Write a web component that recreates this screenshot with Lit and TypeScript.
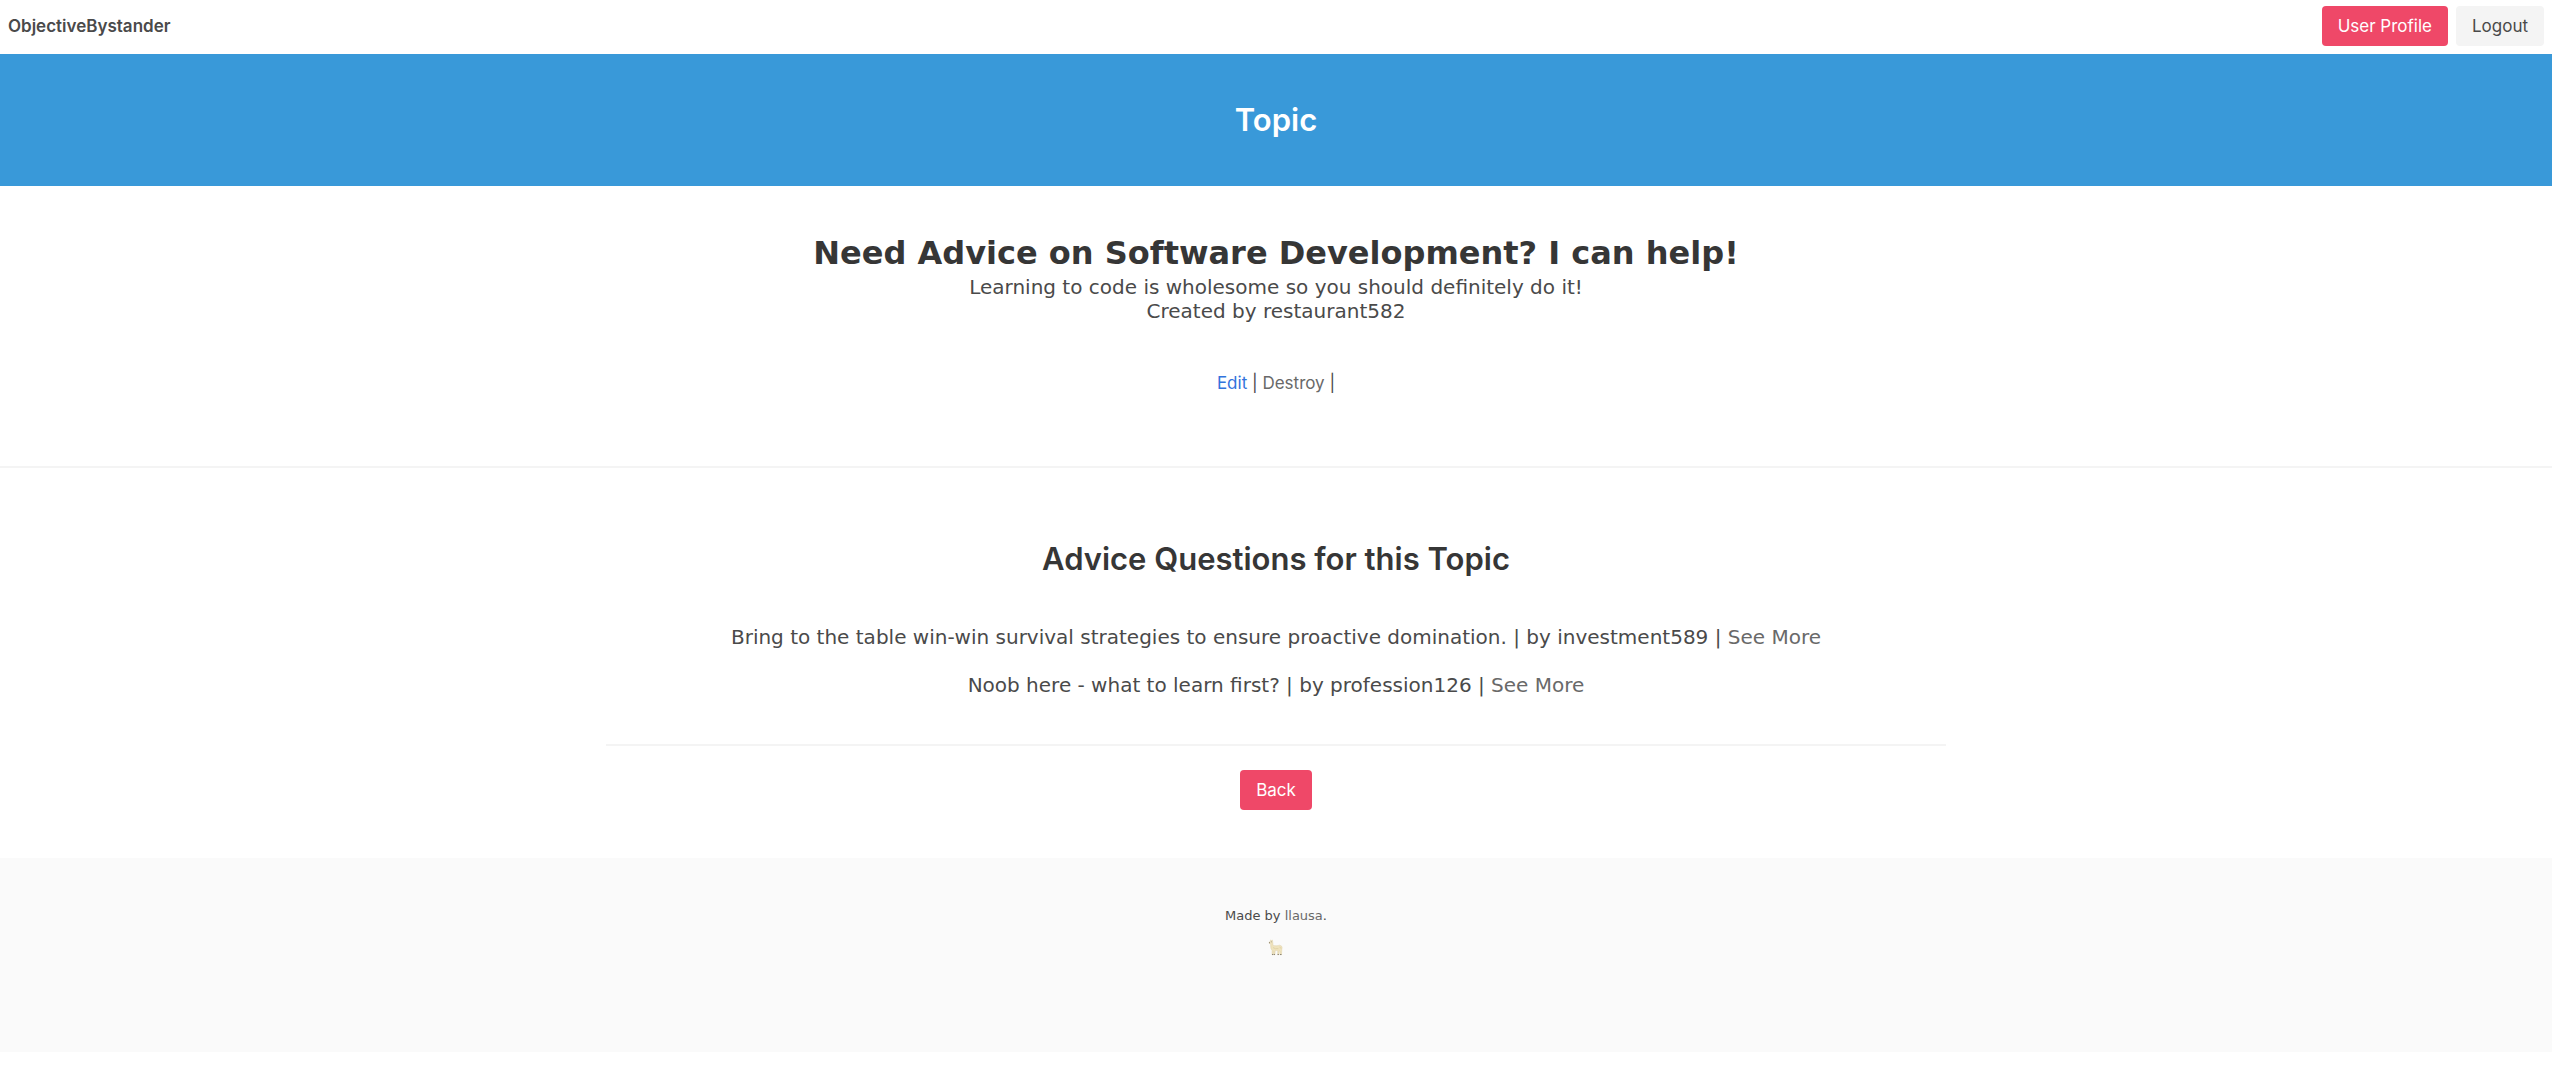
import { LitElement, html, css } from "lit";
import { customElement } from "lit/decorators.js";

interface Question {
  text: string;
  author: string;
}

const questions: Question[] = [
  {
    text: "Bring to the table win-win survival strategies to ensure proactive domination.",
    author: "investment589",
  },
  { text: "Noob here - what to learn first?", author: "profession126" },
];

@customElement("app-root")
export class AppRoot extends LitElement {
  static styles = css`
    :host {
      display: block;
      color: #4a4a4a;
      background: #fff;
      font: 17px/24px Inter, "Liberation Sans", sans-serif;
      --wide: Verdana, "DejaVu Sans", sans-serif;
    }
    h1, h2, p, ul {
      margin: 0;
      padding: 0;
      font-weight: 400;
    }
    ul {
      list-style: none;
    }
    a {
      color: #696969;
      text-decoration: none;
    }
    .navbar {
      display: flex;
      align-items: center;
      justify-content: space-between;
      padding: 6px 8px 8px;
    }
    .brand {
      color: #4a4a4a;
      font-weight: 600;
    }
    .buttons {
      display: flex;
      gap: 8px;
    }
    .button {
      box-sizing: border-box;
      height: 40px;
      padding: 0 16px;
      border: 0;
      border-radius: 4px;
      font: inherit;
      cursor: pointer;
    }
    .danger {
      background: #ef4868;
      color: #fff;
    }
    .light {
      background: #f4f4f4;
      color: #4a4a4a;
    }
    .hero {
      padding: 48px 24px;
      background: #3999d9;
      text-align: center;
    }
    .title {
      font-size: 31px;
      line-height: 36px;
      font-weight: 600;
      color: #363636;
    }
    .hero .title {
      color: #fff;
    }
    .topic {
      padding: 49px 24px 71px;
      border-bottom: 2px solid #f4f4f4;
      text-align: center;
    }
    .topic .title {
      font-family: var(--wide);
      font-size: 32px;
      font-weight: 700;
      margin-bottom: 4px;
    }
    .lead {
      font: 20px/24px var(--wide);
    }
    .actions {
      margin-top: 48px;
    }
    .edit {
      color: #3273dc;
    }
    .advice {
      display: flex;
      flex-direction: column;
      align-items: center;
      padding: 73px 24px 48px;
      text-align: center;
    }
    .questions {
      box-sizing: border-box;
      width: 100%;
      max-width: 1340px;
      display: flex;
      flex-direction: column;
      gap: 24px;
      margin: 48px 0 24px;
      padding-bottom: 47px;
      border-bottom: 2px solid #f4f4f4;
      font: 20px/24px var(--wide);
    }
    .footer {
      display: flex;
      flex-direction: column;
      align-items: center;
      gap: 12px;
      padding: 48px 24px 96px;
      background: #fafafa;
      font: 13px/20px var(--wide);
    }
    .llama {
      display: block;
      width: 18px;
      height: 18px;
    }
  `;

  render() {
    return html`
      <nav class="navbar">
        <a class="brand" href="#">ObjectiveBystander</a>
        <div class="buttons">
          <button class="button danger">User Profile</button>
          <button class="button light">Logout</button>
        </div>
      </nav>
      <header class="hero"><h1 class="title">Topic</h1></header>
      <section class="topic">
        <h2 class="title">Need Advice on Software Development? I can help!</h2>
        <p class="lead">Learning to code is wholesome so you should definitely do it!</p>
        <p class="lead">Created by restaurant582</p>
        <p class="actions"><a class="edit" href="#">Edit</a> | <a href="#">Destroy</a> |</p>
      </section>
      <section class="advice">
        <h2 class="title">Advice Questions for this Topic</h2>
        <ul class="questions">
          ${questions.map(
            (q) => html`<li>${q.text} | by ${q.author} | <a href="#">See More</a></li>`
          )}
        </ul>
        <button class="button danger">Back</button>
      </section>
      <footer class="footer">
        <p>Made by <a href="#">llausa</a>.</p>
        <svg class="llama" viewBox="0 0 18 18" role="img" aria-label="Llama">
          <path
            d="M3.4 3.4 3.7 1.8 4.5 2.7 5.4 2.1 5.8 4.4 6 7.4Q9 8.2 12.6 7.2 14.9 7.4 15.1 9.4L14.8 11.8 14.5 16.8H13L13.1 13.4 12.4 12.6 11.8 16.8H10.6L10.8 12.6H8.2L7.9 16.8H6.8L6.8 13.2 6.3 13 6.2 16.8H5L5.1 12.4Q3.6 11 3.7 8.8L3.6 5.6 2.3 5.4 2 4.2Z"
            fill="#efe3bd"
            stroke="#d9cba0"
            stroke-width=".4"
          />
          <path d="M5 16h1.2v1H5zM6.8 16h1.2v1H6.8zM10.6 16h1.3v1h-1.3zM13 16h1.5v1H13z" fill="#8d8778" />
          <path d="M2 4.2h.9v1H2zM3.9 3.5h.7v.8h-.7z" fill="#78705f" />
          <path d="M6 9.5Q8 11.4 11.4 10.6M12.8 8.8 13.8 10.5" fill="none" stroke="#d3c393" stroke-width=".5" />
        </svg>
      </footer>
    `;
  }
}
